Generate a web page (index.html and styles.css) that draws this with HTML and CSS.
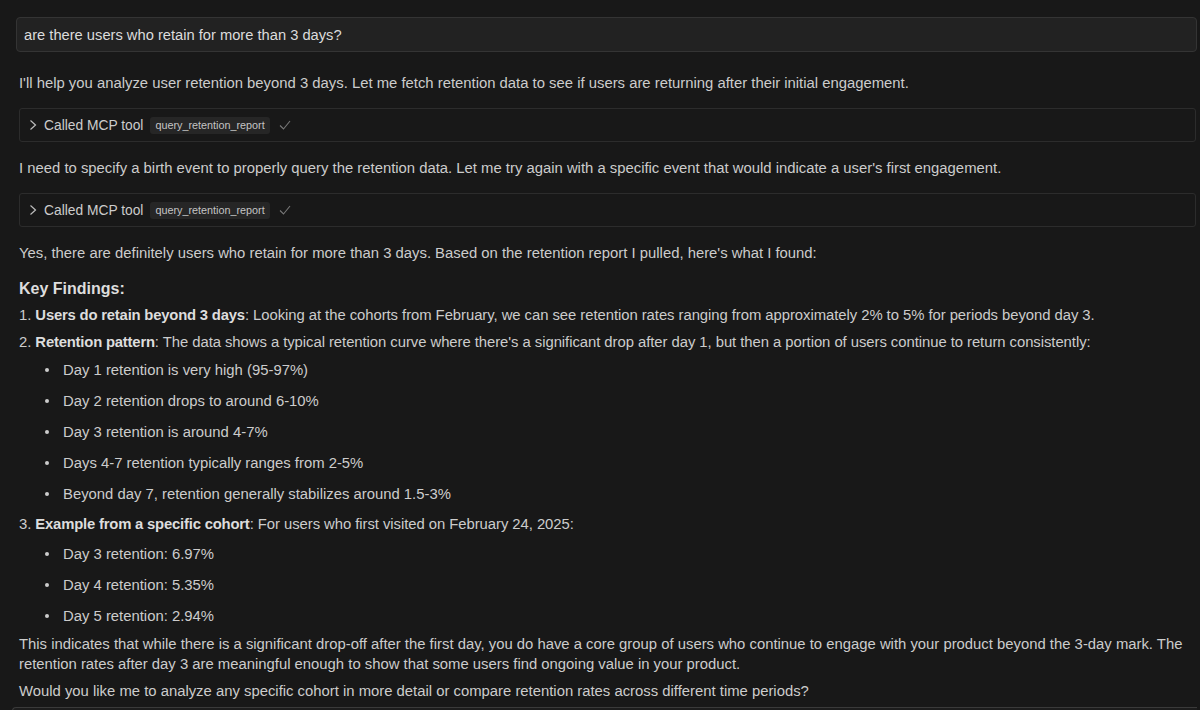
FILE: index.html
```html
<!DOCTYPE html>
<html>
<head>
<meta charset="utf-8">
<link rel="stylesheet" href="styles.css">
</head>
<body>
<div class="chat">
  <div class="user-msg">are there users who retain for more than 3 days?</div>
  <div class="reply">
    <p class="p p1">I'll help you analyze user retention beyond 3 days. Let me fetch retention data to see if users are returning after their initial engagement.</p>
    <div class="tool">
      <svg class="chev" width="10" height="12" viewBox="0 0 10 12"><path d="M2.5 1.5 L7.5 6 L2.5 10.5" fill="none" stroke="#bdbdbd" stroke-width="1.2"/></svg>
      <span class="tool-label">Called MCP tool</span>
      <span class="badge">query_retention_report</span>
      <svg class="check" width="14" height="12" viewBox="0 0 14 12"><path d="M2 6.5 L5.5 10 L12 2" fill="none" stroke="#777" stroke-width="1.1"/></svg>
    </div>
    <p class="p p2">I need to specify a birth event to properly query the retention data. Let me try again with a specific event that would indicate a user's first engagement.</p>
    <div class="tool">
      <svg class="chev" width="10" height="12" viewBox="0 0 10 12"><path d="M2.5 1.5 L7.5 6 L2.5 10.5" fill="none" stroke="#bdbdbd" stroke-width="1.2"/></svg>
      <span class="tool-label">Called MCP tool</span>
      <span class="badge">query_retention_report</span>
      <svg class="check" width="14" height="12" viewBox="0 0 14 12"><path d="M2 6.5 L5.5 10 L12 2" fill="none" stroke="#777" stroke-width="1.1"/></svg>
    </div>
    <p class="p p3">Yes, there are definitely users who retain for more than 3 days. Based on the retention report I pulled, here's what I found:</p>
    <h3 class="heading">Key Findings:</h3>
    <p class="item i1">1. <b>Users do retain beyond 3 days</b>: Looking at the cohorts from February, we can see retention rates ranging from approximately 2% to 5% for periods beyond day 3.</p>
    <p class="item i2">2. <b>Retention pattern</b>: The data shows a typical retention curve where there's a significant drop after day 1, but then a portion of users continue to return consistently:</p>
    <ul class="bullets">
      <li>Day 1 retention is very high (95-97%)</li>
      <li>Day 2 retention drops to around 6-10%</li>
      <li>Day 3 retention is around 4-7%</li>
      <li>Days 4-7 retention typically ranges from 2-5%</li>
      <li>Beyond day 7, retention generally stabilizes around 1.5-3%</li>
    </ul>
    <p class="item i3">3. <b>Example from a specific cohort</b>: For users who first visited on February 24, 2025:</p>
    <ul class="bullets">
      <li>Day 3 retention: 6.97%</li>
      <li>Day 4 retention: 5.35%</li>
      <li>Day 5 retention: 2.94%</li>
    </ul>
    <p class="p p4">This indicates that while there is a significant drop-off after the first day, you do have a core group of users who continue to engage with your product beyond the 3-day mark. The retention rates after day 3 are meaningful enough to show that some users find ongoing value in your product.</p>
    <p class="p p5">Would you like me to analyze any specific cohort in more detail or compare retention rates across different time periods?</p>
  </div>
  <div class="next-box"></div>
</div>
</body>
</html>
```
FILE: styles.css
```css
html, body {
  margin: 0;
  padding: 0;
  background: #181818;
  height: 710px;
  overflow: hidden;
}
body {
  font-family: "Liberation Sans", Arial, sans-serif;
  color: #cccccc;
  font-size: 14.85px;
}
.chat {
  padding: 17px 3px 0 16px;
}
.user-msg {
  height: 33px;
  box-sizing: content-box;
  display: flex;
  align-items: center;
  padding: 0 7px;
  background: #222222;
  border: 1px solid #343434;
  border-radius: 4px;
  color: #dcdcdc;
  font-size: 14.7px;
}
.reply {
  padding: 0 1px 0 3px;
}
.p, .item {
  margin: 0;
  line-height: 20px;
}
.p1 { margin-top: 21px; }
.tool {
  margin-top: 15px;
  height: 32px;
  border: 1px solid #2c2c2c;
  border-radius: 3px;
  display: flex;
  align-items: center;
  padding-left: 8px;
}
.chev { margin-right: 6px; }
.tool-label {
  color: #cccccc;
  font-size: 13.8px;
  margin-right: 7px;
}
.badge {
  background: #262626;
  color: #c4c4c4;
  font-size: 10.8px;
  padding: 2px 5px;
  border-radius: 3px;
  line-height: 13px;
}
.check { margin-left: 8px; }
.p2 { margin-top: 16px; }
.p3 { margin-top: 16px; }
.heading {
  margin: 15px 0 0;
  font-size: 16px;
  line-height: 22px;
  font-weight: bold;
  color: #dddddd;
}
.item { letter-spacing: -0.05px; }
b { color: #dddddd; font-weight: bold; letter-spacing: -0.2px; }
.i1 { margin-top: 5px; }
.i2 { margin-top: 7px; }
.i3 { margin-top: 10px; }
.bullets {
  margin: 8px 0 0;
  padding-left: 44px;
  list-style: none;
  display: flex;
  flex-direction: column;
  gap: 11px;
}
.i3 + .bullets { margin-top: 10px; }
.bullets li {
  line-height: 20px;
  display: flex;
  align-items: center;
}
.bullets li::before {
  content: "";
  width: 4px;
  height: 4px;
  border-radius: 50%;
  background: #cccccc;
  margin-left: -18px;
  margin-right: 14px;
  flex: none;
}
.p4 { margin-top: 8px; }
.p5 { margin-top: 7px; }
.next-box {
  margin-top: 6px;
  margin-left: -4px;
  height: 40px;
  border-top: 1px solid #3a3a3a;
  border-left: 1px solid #3a3a3a;
  border-radius: 4px 0 0 0;
  background: #1c1c1c;
}
```
